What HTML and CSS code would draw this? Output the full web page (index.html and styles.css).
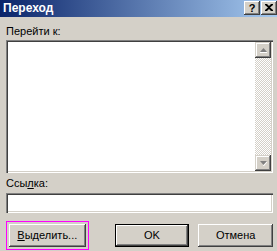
FILE: index.html
```html
<!DOCTYPE html>
<html>
<head>
<meta charset="utf-8">
<link rel="stylesheet" href="styles.css">
</head>
<body>
<div class="window">
  <div class="titlebar">
    <span class="title">Переход</span>
    <div class="tbtns">
      <div class="tbtn help">?</div>
      <div class="tbtn close">
        <svg width="8" height="7" viewBox="0 0 8 7"><path d="M0 0h2l2 2 2-2h2v1L5 3.5 8 6v1H6L4 5 2 7H0V6l3-2.5L0 1z" fill="#000"/></svg>
      </div>
    </div>
  </div>
  <div class="content">
    <div class="label first">Перейти к:</div>
    <div class="listbox">
      <div class="list"></div>
      <div class="scrollbar">
        <div class="sbtn"><svg width="7" height="5" viewBox="0 0 7 5"><path d="M3.5 0L7 4H0z" fill="#808080"/><path d="M0 4h7v1H0z" fill="#fff"/></svg></div>
        <div class="track"></div>
        <div class="sbtn"><svg width="7" height="5" viewBox="0 0 7 5"><path d="M0 0h7L3.5 4z" fill="#808080"/><path d="M3.5 4L7 0.5V1.5L4 5H3z" fill="#fff"/></svg></div>
      </div>
    </div>
    <div class="label second">Ссы<u>л</u>ка:</div>
    <div class="input"></div>
    <div class="buttons">
      <div class="btn select"><span><u>В</u>ыделить...</span></div>
      <div class="btn ok default">OK</div>
      <div class="btn cancel">Отмена</div>
    </div>
  </div>
</div>
</body>
</html>
```
FILE: styles.css
```css
* { box-sizing: border-box; }
html, body { margin: 0; padding: 0; }
body {
  width: 277px;
  height: 251px;
  overflow: hidden;
  background: #d4d0c8;
  font-family: "Liberation Sans", Arial, sans-serif;
  font-size: 11px;
  color: #000;
}
.window {
  width: 277px;
  height: 251px;
  background: #d4d0c8;
}
.titlebar {
  height: 17px;
  background: linear-gradient(to right, #0a246a, #a6caf0);
  display: flex;
  align-items: flex-start;
  justify-content: space-between;
}
.title {
  color: #fff;
  font-weight: bold;
  font-size: 12px;
  line-height: 16px;
  padding-left: 3px;
}
.tbtns {
  display: flex;
  gap: 1px;
  padding-top: 1px;
  padding-right: 0;
}
.tbtn {
  width: 16px;
  height: 14px;
  background: #d4d0c8;
  box-shadow: inset -1px -1px #404040, inset 1px 1px #fff, inset -2px -2px #808080;
  display: flex;
  align-items: center;
  justify-content: center;
}
.help {
  font-weight: bold;
  font-size: 11px;
  line-height: 12px;
  padding-bottom: 1px;
}
.close svg { margin-top: -1px; }
.content {
  padding: 0 4px 0 6px;
}
.label {
  line-height: 13px;
  height: 13px;
}
.label.first { margin-top: 8px; margin-bottom: 2px; }
.label.second { margin-top: 4px; margin-bottom: 3px; }
.listbox {
  height: 133px;
  display: flex;
  padding: 2px;
  background: #fff;
  box-shadow: inset 1px 1px #808080, inset 2px 2px #404040, inset -1px -1px #fff, inset -2px -2px #d4d0c8;
}
.list { flex: 1; background: #fff; }
.scrollbar {
  width: 16px;
  display: flex;
  flex-direction: column;
}
.sbtn {
  height: 16px;
  background: #d4d0c8;
  box-shadow: inset -1px -1px #404040, inset 1px 1px #d4d0c8, inset -2px -2px #808080, inset 2px 2px #fff;
  display: flex;
  align-items: center;
  justify-content: center;
}
.track {
  flex: 1;
  background: repeating-conic-gradient(#fff 0 25%, #d4d0c8 0 50%) 0 0 / 2px 2px;
}
.input {
  height: 20px;
  background: #fff;
  box-shadow: inset 1px 1px #808080, inset 2px 2px #404040, inset -1px -1px #fff, inset -2px -2px #d4d0c8;
}
.buttons {
  display: flex;
  margin-top: 11px;
  padding-left: 3px;
}
.btn {
  height: 23px;
  width: 75px;
  background: #d4d0c8;
  box-shadow: inset -1px -1px #404040, inset 1px 1px #fff, inset -2px -2px #808080, inset 2px 2px #d4d0c8;
  display: flex;
  align-items: center;
  justify-content: center;
  line-height: 13px;
}
.btn.select {
  width: 77px;
  outline: 1px solid #ff00ff;
  outline-offset: 2px;
}
.btn.ok { margin-left: 29px; }
.btn.cancel { margin-left: 9px; }
.btn.default {
  box-shadow: inset 0 0 0 1px #000, inset -2px -2px #404040, inset 2px 2px #fff, inset -3px -3px #808080;
}
```
